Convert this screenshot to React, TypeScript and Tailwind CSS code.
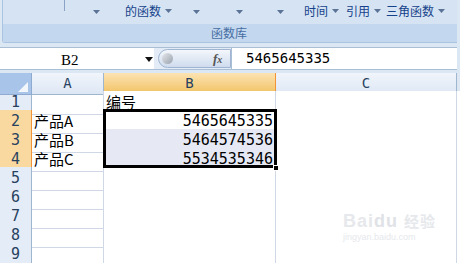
import React from "react";

const cjk = "font-['Noto_Sans_CJK_SC','Noto_Sans',sans-serif]";
const mono = "font-['DejaVu_Sans_Mono','Noto_Sans_CJK_SC',monospace]";

function Arrow({ className = "" }: { className?: string }) {
  return (
    <svg width="7" height="4" viewBox="0 0 7 4" className={className}>
      <path d="M0 0h7L3.5 4z" fill="#5b7396" />
    </svg>
  );
}

function Ribbon() {
  return (
    <div className="h-[44px] bg-[#dce7f4] pl-[2px] pr-[3px]">
      <div className="h-[43px] border-b border-l border-[#a9c3e0] rounded-bl-[3px] flex flex-col">
        <div className={`h-[24px] bg-[#d5e3f2] relative flex items-center text-[12px] text-[#15428b] ${cjk}`}>
          <div className="absolute left-[61px] top-0 w-[1px] h-[11px] bg-[#8aa3c4]" />
          <Arrow className="absolute left-[90px] top-[10px]" />
          <span className="absolute left-[122px] top-[2px] flex items-center gap-[4px]">
            的函数 <Arrow />
          </span>
          <Arrow className="absolute left-[190px] top-[10px]" />
          <Arrow className="absolute left-[233px] top-[10px]" />
          <Arrow className="absolute left-[274px] top-[10px]" />
          <span className="absolute left-[301px] top-[2px] flex items-center gap-[4px]">
            时间 <Arrow />
          </span>
          <span className="absolute left-[343px] top-[2px] flex items-center gap-[4px]">
            引用 <Arrow />
          </span>
          <span className="absolute left-[383px] top-[2px] flex items-center gap-[4px]">
            三角函数 <Arrow />
          </span>
        </div>
        <div className={`flex-1 bg-[#c3d7ee] flex items-center justify-center text-[12px] text-[#466ea3] ${cjk}`}>
          <span className="ml-[-2px]">函数库</span>
        </div>
      </div>
    </div>
  );
}

function FormulaBar() {
  return (
    <div className="h-[29px] bg-[#dce7f4] pt-[3px] pb-[3px] pr-[3px]">
      <div className="h-[23px] flex border-y border-[#a9bfd6] bg-white">
        <div className="w-[154px] relative flex items-center">
          <span className="absolute left-[61px] top-[1px] text-[15px] text-black font-['Liberation_Serif',serif]">B2</span>
          <svg width="8" height="5" viewBox="0 0 8 5" className="absolute left-[145px] top-[9px]">
            <path d="M0 0h8L4 5z" fill="#111" />
          </svg>
        </div>
        <div className="w-[77px] relative bg-[#e3ebf6]">
          <div className="absolute left-[4px] top-[1px] right-[0px] bottom-[1px] rounded-l-full border border-[#9fb5d2] bg-gradient-to-b from-[#f4f7fb] to-[#cfdcee]" />
          <div className="absolute left-[8px] top-[5px] w-[11px] h-[11px] rounded-full bg-gradient-to-br from-[#e6e8ec] to-[#9aa2ad]" />
          <span className="absolute left-[59px] top-[1px] text-[13px] italic font-bold text-[#555] font-['Liberation_Serif',serif]">
            f<span className="text-[10px]">x</span>
          </span>
        </div>
        <div className="flex-1 border-l border-[#a9bfd6] flex items-center pl-[14px]">
          <span className={`text-[14px] text-black ${mono}`}>5465645335</span>
        </div>
      </div>
    </div>
  );
}

const rows: { a: string; b: string }[] = [
  { a: "", b: "编号" },
  { a: "产品A", b: "5465645335" },
  { a: "产品B", b: "5464574536" },
  { a: "产品C", b: "5534535346" },
  { a: "", b: "" },
  { a: "", b: "" },
  { a: "", b: "" },
  { a: "", b: "" },
  { a: "", b: "" },
];

function Sheet() {
  const cols = "grid grid-cols-[32px_72px_172px_181px_3px]";
  return (
    <div className="relative">
      <div className={`${cols} h-[18px]`}>
        <div className="relative bg-[#a9c4e9] border-r border-b border-[#8eaad0]">
          <svg width="10" height="10" viewBox="0 0 10 10" className="absolute right-[3px] bottom-[2px]">
            <path d="M10 0V10H0z" fill="#f3f7fc" />
          </svg>
        </div>
        <div className={`bg-gradient-to-b from-[#f1f5fb] to-[#dde7f4] border-r border-b border-[#9eb6ce] flex items-center justify-center text-[14px] text-[#27415f] ${mono}`}>A</div>
        <div className={`bg-gradient-to-b from-[#fbe3b2] to-[#f1c15f] border-r border-b border-[#f29436] flex items-center justify-center text-[14px] text-[#27415f] ${mono}`}>B</div>
        <div className={`bg-gradient-to-b from-[#f1f5fb] to-[#dde7f4] border-r border-b border-[#9eb6ce] flex items-center justify-center text-[14px] text-[#27415f] ${mono}`}>C</div>
        <div className="bg-[#dde7f4]" />
      </div>
      {rows.map((r, i) => {
        const sel = i >= 1 && i <= 3;
        const fill = i >= 2 && i <= 3;
        return (
          <div key={i} className={`${cols} h-[19px]`}>
            <div
              className={`border-r border-b flex items-center justify-center text-[15px] text-[#27415f] ${mono} ${
                sel ? "bg-[#f9d99f] border-[#f29436]" : "bg-[#e4ecf7] border-[#9eb6ce]"
              }`}
            >
              {i + 1}
            </div>
            <div className={`border-r border-b border-[#d0d7e5] flex items-center pl-[2px] text-[15px] text-black ${cjk}`}>
              {r.a}
            </div>
            <div
              className={`border-r border-b border-[#d0d7e5] flex items-center text-[15px] text-black ${
                i === 0 ? `justify-start pl-[2px] ${cjk}` : `justify-end pr-[2px] ${mono}`
              } ${fill ? "bg-[#e6e9f4]" : "bg-white"}`}
            >
              {r.b}
            </div>
            <div className="border-r border-b border-[#d0d7e5] bg-white" />
            <div className="bg-white" />
          </div>
        );
      })}
      {/* selection outline B2:B4 */}
      <div className="absolute left-[103px] top-[36px] w-[174px] h-[59px] border-[3px] border-black pointer-events-none" />
      <div className="absolute left-[273px] top-[92px] w-[6px] h-[6px] bg-black border border-white pointer-events-none" />
      {/* watermark */}
      <div className="absolute left-[343px] top-[139px] text-[#e6e8ec] pointer-events-none leading-none">
        <div className="text-[18px] font-bold font-['Liberation_Sans',sans-serif] tracking-[1px]">
          Bai<span className="text-[#dfe2e7]">du</span> <span className={`text-[15px] ${cjk}`}>经验</span>
        </div>
        <div className="text-[9px] mt-[3px] font-['Liberation_Sans',sans-serif]">jingyan.baidu.com</div>
      </div>
    </div>
  );
}

export default function App() {
  return (
    <div className="w-[460px] h-[263px] overflow-hidden bg-white">
      <Ribbon />
      <FormulaBar />
      <Sheet />
    </div>
  );
}
